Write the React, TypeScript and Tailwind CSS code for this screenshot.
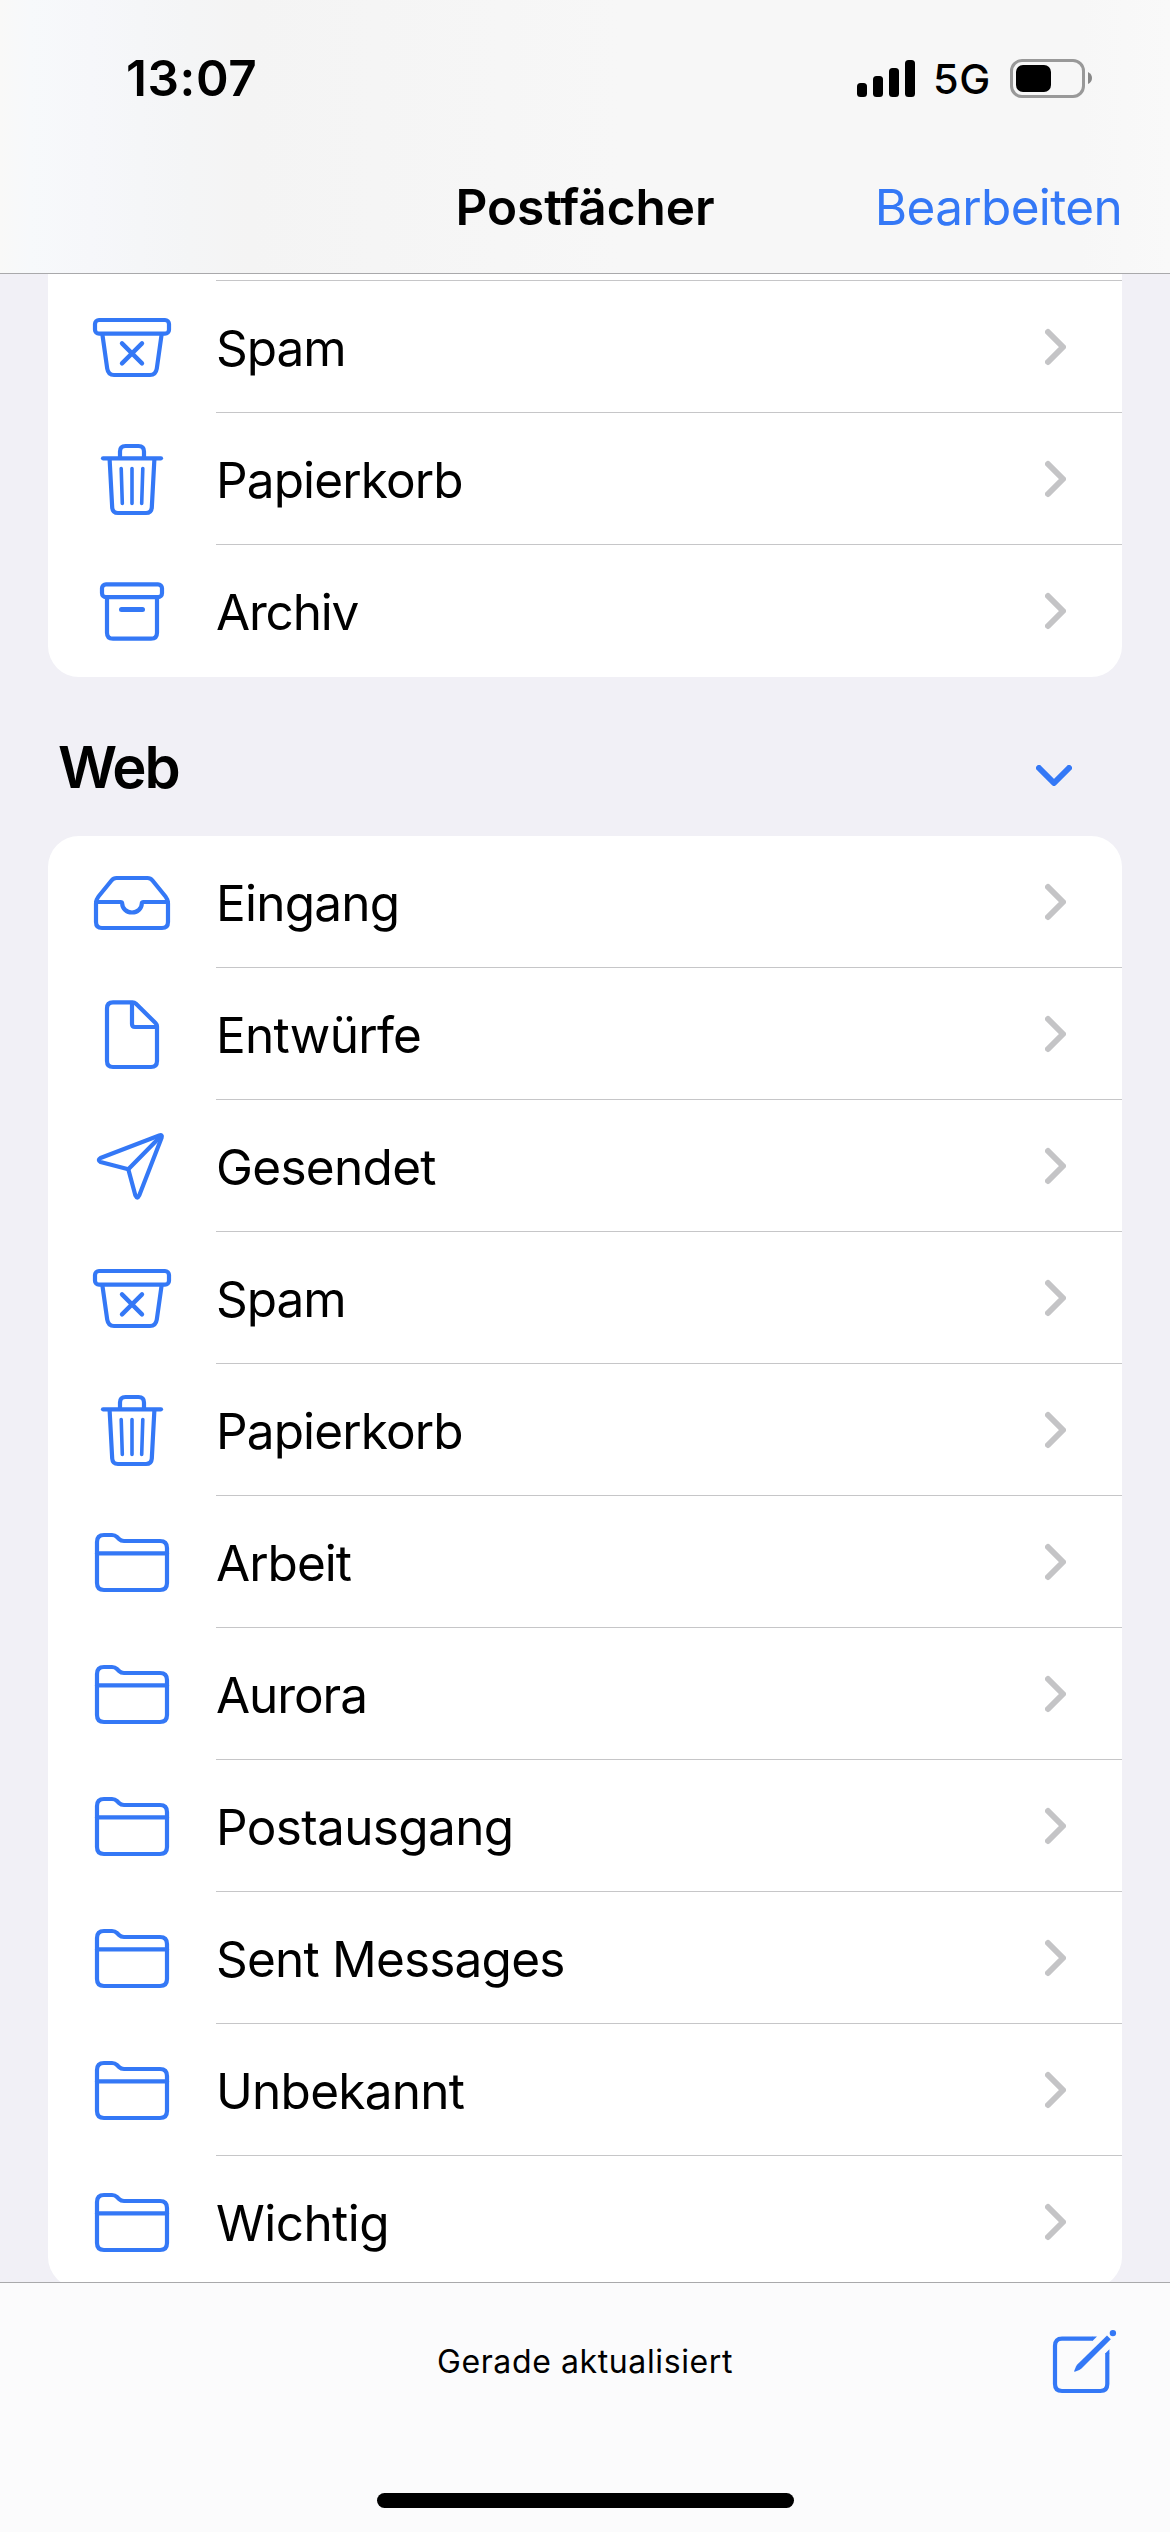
import type { ReactNode } from "react";

type IconName = "spam" | "trash" | "archive" | "inbox" | "draft" | "sent" | "folder";

type Mailbox = { label: string; icon: IconName; tracking: string };

const accountMailboxes: Mailbox[] = [
  { label: "Spam", icon: "spam", tracking: "tracking-[-1px]" },
  { label: "Papierkorb", icon: "trash", tracking: "tracking-[-0.87px]" },
  { label: "Archiv", icon: "archive", tracking: "tracking-[-1.2px]" },
];

const webMailboxes: Mailbox[] = [
  { label: "Eingang", icon: "inbox", tracking: "tracking-[-0.76px]" },
  { label: "Entwürfe", icon: "draft", tracking: "tracking-[-0.7px]" },
  { label: "Gesendet", icon: "sent", tracking: "tracking-[-0.7px]" },
  { label: "Spam", icon: "spam", tracking: "tracking-[-1px]" },
  { label: "Papierkorb", icon: "trash", tracking: "tracking-[-0.87px]" },
  { label: "Arbeit", icon: "folder", tracking: "tracking-[-0.98px]" },
  { label: "Aurora", icon: "folder", tracking: "tracking-[-1.08px]" },
  { label: "Postausgang", icon: "folder", tracking: "tracking-[-0.64px]" },
  { label: "Sent Messages", icon: "folder", tracking: "tracking-[-0.8px]" },
  { label: "Unbekannt", icon: "folder", tracking: "tracking-[-0.74px]" },
  { label: "Wichtig", icon: "folder", tracking: "tracking-[-0.55px]" },
];

/* Icon shapes are centred on x = 0 and span the full 132px row height. */
const shapes: Record<IconName, ReactNode> = {
  spam: (
    <>
      <rect x="-37" y="39" width="74" height="13.7" rx="4" />
      <path d="M-29.6 53.5L-24.8 87.5Q-23.8 94 -18 94H18Q23.8 94 24.8 87.5L29.6 53.5" />
      <path d="M-10 62.4L10 82.4M10 62.4L-10 82.4" strokeWidth="4.4" />
    </>
  ),
  trash: (
    <>
      <path d="M-29 45.3H29" />
      <path d="M-12 45V38.5Q-12 33 -6.5 33H6.5Q12 33 12 38.5V45" />
      <path d="M-22.4 46L-19.8 94.5Q-19.4 100 -14 100H14Q19.4 100 19.8 94.5L22.4 46" />
      <path d="M-10.8 55.5L-9.7 90.500M0 55.5V90.500M10.8 55.5L9.7 90.5" strokeWidth="3.6" />
    </>
  ),
  archive: (
    <>
      <rect x="-30" y="39.3" width="60" height="12.9" rx="4" />
      <path d="M-25 53V87.7Q-25 93.7 -19 93.7H19Q25 93.7 25 87.7V53" />
      <path d="M-10.5 64.4H10.5" strokeWidth="5" />
    </>
  ),
  inbox: (
    <>
      <path d="M-36 67.5Q-36 63.5 -33.5 60.5L-20.5 44.5Q-18.5 42 -15.5 42H15.5Q18.5 42 20.5 44.5L33.5 60.5Q36 63.5 36 67.5V86Q36 92 30 92H-30Q-36 92 -36 86Z" />
      <path d="M-36 66H-11.5Q-9.8 66 -9.8 67.5A9.8 9 0 0 0 9.8 67.5Q9.8 66 11.5 66H36" />
    </>
  ),
  draft: (
    <>
      <path d="M-25 40.3Q-25 34.3 -19 34.3H0.5Q2.5 34.3 4 35.8L23.5 55Q25 56.5 25 58.5V93Q25 99 19 99H-19Q-25 99 -25 93Z" />
      <path d="M0 35V56Q0 59 3 59H25" />
    </>
  ),
  sent: (
    <>
      <path d="M-31.5 58L27.2 35.5Q30.7 34.3 29.6 37.8L7.2 95.5Q5.3 99.7 3.4 95.5L-3.7 69.3L-31.5 62Q-34.8 60 -31.5 58Z" />
      <path d="M-3.7 69.3L28.5 36.5" />
    </>
  ),
  folder: (
    <>
      <path d="M-35 87V46Q-35 39 -28 39H-20Q-17 39 -15 41L-13 43Q-11 45 -8 45H28Q35 45 35 52V87Q35 94 28 94H-28Q-35 94 -35 87Z" />
      <path d="M-35 57.4H35" />
    </>
  ),
};

function MailboxRow({ label, icon, tracking, last }: Mailbox & { last: boolean }) {
  return (
    <li className="flex h-[132px] pl-9">
      <svg viewBox="-48 0 96 132" className="h-[132px] w-24 shrink-0 fill-none stroke-[#3478f6]" strokeWidth="4.2" strokeLinecap="round" strokeLinejoin="round">
        {shapes[icon]}
      </svg>
      <div className={`ml-9 flex flex-1 justify-between pr-14 ${last ? "" : "border-b border-[#c6c6c8]"}`}>
        <span className={`pt-[3px] text-[49.5px] leading-[128px] whitespace-nowrap ${tracking}`}>{label}</span>
        <svg viewBox="0 0 21 132" className="h-[132px] w-[21px] fill-none stroke-[#c4c4c6]" strokeWidth="6" strokeLinecap="round" strokeLinejoin="round">
          <path d="M3 51L18 66L3 81" />
        </svg>
      </div>
    </li>
  );
}

function MailboxList({ items }: { items: Mailbox[] }) {
  return (
    <ul>
      {items.map((item, i) => (
        <MailboxRow key={item.label} {...item} last={i === items.length - 1} />
      ))}
    </ul>
  );
}

function StatusBar() {
  return (
    <div className="flex h-[156px] items-center justify-between pr-[78px] pl-[126px]">
      <span className="pt-0.5 text-[49.5px] leading-none font-semibold tracking-[0.58px]">13:07</span>
      <div className="flex items-center">
        <div className="flex h-[37px] items-end gap-1.5">
          <span className="h-3.5 w-2.5 rounded-[3.5px] bg-black" />
          <span className="h-[21px] w-2.5 rounded-[3.5px] bg-black" />
          <span className="h-[29px] w-2.5 rounded-[3.5px] bg-black" />
          <span className="h-[37px] w-2.5 rounded-[3.5px] bg-black" />
        </div>
        <span className="ml-[18px] w-[77px] pt-[3px] text-[41.5px] leading-none font-[450] tracking-[0.6px]">5G</span>
        <div className="flex h-[39px] w-[75px] rounded-[12px] border-3 border-[#999] p-[3px]">
          <span className="h-full w-[35px] rounded-[7px] bg-black" />
        </div>
        <svg viewBox="0 0 4 12" className="ml-[3px] h-3 w-1 fill-[#888]">
          <path d="M0 0Q4 2 4 6T0 12Z" />
        </svg>
      </div>
    </div>
  );
}

export default function App() {
  return (
    <div className="flex h-[2532px] w-[1170px] flex-col overflow-hidden bg-[#f1f0f6] font-[Inter,sans-serif] text-black">
      <header className="h-[274px] shrink-0 border-b border-[#a9a9ab] bg-linear-[90deg,#f9f9f8_0px,#f7f9fb_30px,#f6f7fa_90px,#f4f5f6_190px,#f4f4f4_250px,#f6f6f6_500px,#f7f7f7_620px,#f7f7f7_1080px,#f9f9f9_1170px]">
        <StatusBar />
        <div className="grid grid-cols-3 pr-[48px] pl-[48px]">
          <span />
          <h1 className="text-center text-[49.5px] leading-[102px] font-semibold tracking-[-0.08px] whitespace-nowrap">Postfächer</h1>
          <button className="text-right text-[49.5px] leading-[102px] tracking-[-0.67px] text-[#3478f6]">Bearbeiten</button>
        </div>
      </header>

      <main className="h-[2008px] shrink-0 overflow-hidden px-12">
        <section className="rounded-b-[31px] bg-white">
          <div className="ml-[168px] h-[7px] border-b border-[#c6c6c8]" />
          <MailboxList items={accountMailboxes} />
        </section>

        <div className="flex h-[159px] items-start justify-between pr-[50px] pl-2.5">
          <h2 className="pt-[50px] text-[58px] leading-[80px] font-semibold tracking-[-2px]">Web</h2>
          <svg viewBox="0 0 36 21" className="mt-[88px] h-[21px] w-9 fill-none stroke-[#3478f6]" strokeWidth="6" strokeLinecap="round" strokeLinejoin="round">
            <path d="M3 3L18 18L33 3" />
          </svg>
        </div>

        <section className="rounded-[31px] bg-white">
          <MailboxList items={webMailboxes} />
        </section>
      </main>

      <footer className="flex h-[250px] shrink-0 flex-col border-t border-[#a9a9ab] bg-[#fbfbfc]">
        <div className="grid grid-cols-3 pt-[43px] pr-[50px] pl-[50px]">
          <span />
          <p className="pt-[14px] text-center text-[32px] leading-[44px] tracking-[0.61px] whitespace-nowrap">Gerade aktualisiert</p>
          <svg viewBox="0 0 70 70" className="h-[70px] w-[70px] justify-self-end">
            <path d="M43 12.7H12Q5 12.7 5 19.7V58Q5 65 12 65H50.3Q57.3 65 57.3 58V27" className="fill-none stroke-[#3478f6]" strokeWidth="4.2" />
            <path d="M42.7 14.8V10.6H47Z M55.2 27.5H59.4V23.3Z" className="fill-[#3478f6]" />
            <path d="M57 9.6L60.8 13.3L31.5 42.5Q30.5 43.4 29.3 44L24.8 45.8Q24 45.9 24.2 45.1L26 40.5Q26.5 39.4 27.3 38.6Z" className="fill-[#3478f6]" />
            <circle cx="62.9" cy="7.1" r="3.2" className="fill-[#3478f6]" />
          </svg>
        </div>
        <div className="mt-auto mb-6 h-[15px] w-[417px] self-center rounded-full bg-black" />
      </footer>
    </div>
  );
}
